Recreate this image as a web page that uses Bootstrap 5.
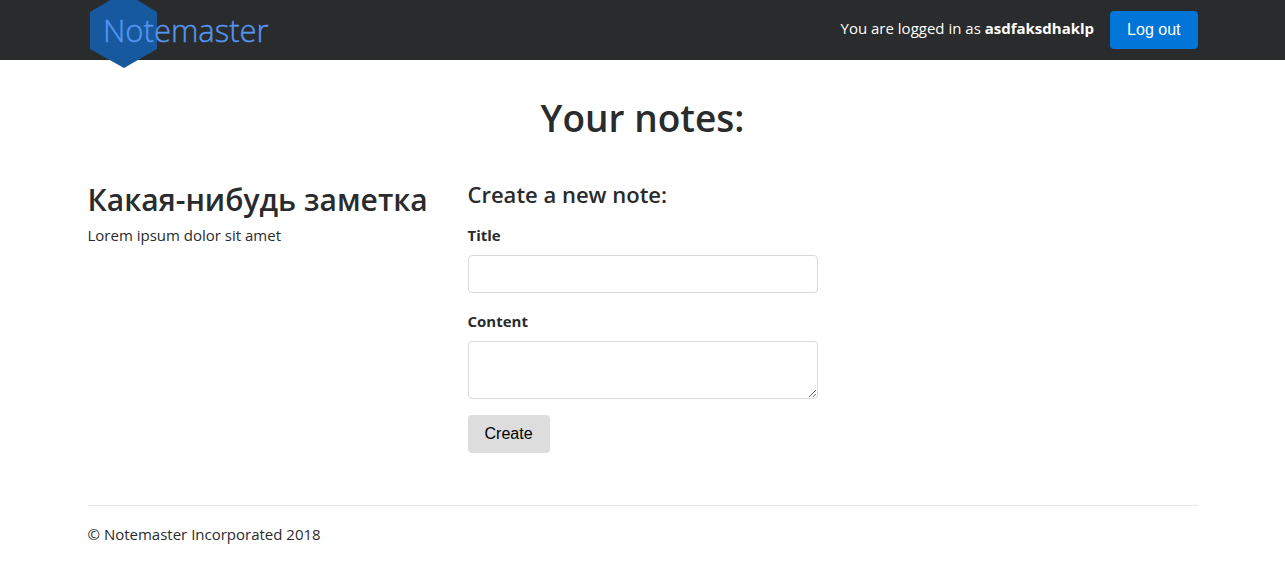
<!DOCTYPE html>
<html lang="en">
<head>
<meta charset="utf-8">
<meta name="viewport" content="width=device-width, initial-scale=1">
<title>Notemaster</title>
<link href="https://cdn.jsdelivr.net/npm/bootstrap@5.3.0/dist/css/bootstrap.min.css" rel="stylesheet">
<style>
  body { font-family: "Open Sans", "Noto Sans", sans-serif; font-size: 15px; line-height: 24px; color: #292b2c; }
  .container, .row { --bs-gutter-x: 30px; }
  .site-header { background: #292b2c; min-height: 60px; }
  .brand-logo { display: block; width: 184px; height: 72px; margin: -4px 0 -8px; overflow: visible; }
  .brand-logo text { font-family: "Open Sans", sans-serif; font-weight: 300; font-size: 31px; fill: #5596f0; stroke: #5596f0; stroke-width: .4px; }
  .user-name { padding-bottom: 4px; }
  h1, h2, h3 { font-family: "Open Sans", "Noto Sans", sans-serif; font-weight: 600; }
  h1 { font-size: 37px; line-height: 44px; margin: 36px 0 41px; }
  h2 { font-size: 30px; line-height: 38px; }
  h3 { font-size: 22px; line-height: 26px; }
  .btn { --bs-btn-font-family: "Liberation Sans", Arial, sans-serif; --bs-btn-padding-x: 17px; --bs-btn-border-width: 0px; --bs-btn-padding-y: 7px; --bs-btn-border-radius: 4px; line-height: 24px; }
  .btn-logout { --bs-btn-bg: #0275d8; --bs-btn-color: #fff; --bs-btn-hover-bg: #025aa5; --bs-btn-hover-color: #fff; }
  .btn-create { --bs-btn-bg: #ddd; --bs-btn-color: #000; --bs-btn-hover-bg: #ccc; }
  .form-control { border-color: #d9d9d9; border-radius: 4px; padding: 6px 12px; line-height: 24px; }
  textarea.form-control { height: 58px; min-height: 58px; }
  .footer-wrap { margin-top: 52px; }
  .site-footer { border-top: 1px solid #e5e5e5; }
</style>
</head>
<body>
<header class="site-header">
  <div class="container d-flex justify-content-between">
    <a href="#" aria-label="Notemaster">
      <svg class="brand-logo" viewBox="0 0 184 72">
        <path d="M36 -4 69 16V53L36 72 2 53V16Z" fill="#17599f"/>
        <text x="15" y="46">Notemaster</text>
      </svg>
    </a>
    <div class="d-flex align-items-center gap-3">
      <span class="user-name text-white">You are logged in as <strong>asdfaksdhaklp</strong></span>
      <button type="button" class="btn btn-logout">Log out</button>
    </div>
  </div>
</header>
<main class="container">
  <h1 class="text-center">Your notes:</h1>
  <div class="row">
    <article class="col-md-4">
      <h2 class="mb-1">Какая-нибудь заметка</h2>
      <p>Lorem ipsum dolor sit amet</p>
    </article>
    <section class="col-md-4">
      <h3 class="mb-3">Create a new note:</h3>
      <form>
        <div class="mb-3">
          <label class="fw-bold mb-2" for="note-title">Title</label>
          <input class="form-control" id="note-title" type="text">
        </div>
        <div class="mb-3">
          <label class="fw-bold mb-2" for="note-content">Content</label>
          <textarea class="form-control" id="note-content" rows="2"></textarea>
        </div>
        <button type="submit" class="btn btn-create">Create</button>
      </form>
    </section>
  </div>
</main>
<div class="footer-wrap container">
  <footer class="site-footer pt-3 pb-3">© Notemaster Incorporated 2018</footer>
</div>
<script src="https://cdn.jsdelivr.net/npm/bootstrap@5.3.0/dist/js/bootstrap.bundle.min.js"></script>
</body>
</html>
